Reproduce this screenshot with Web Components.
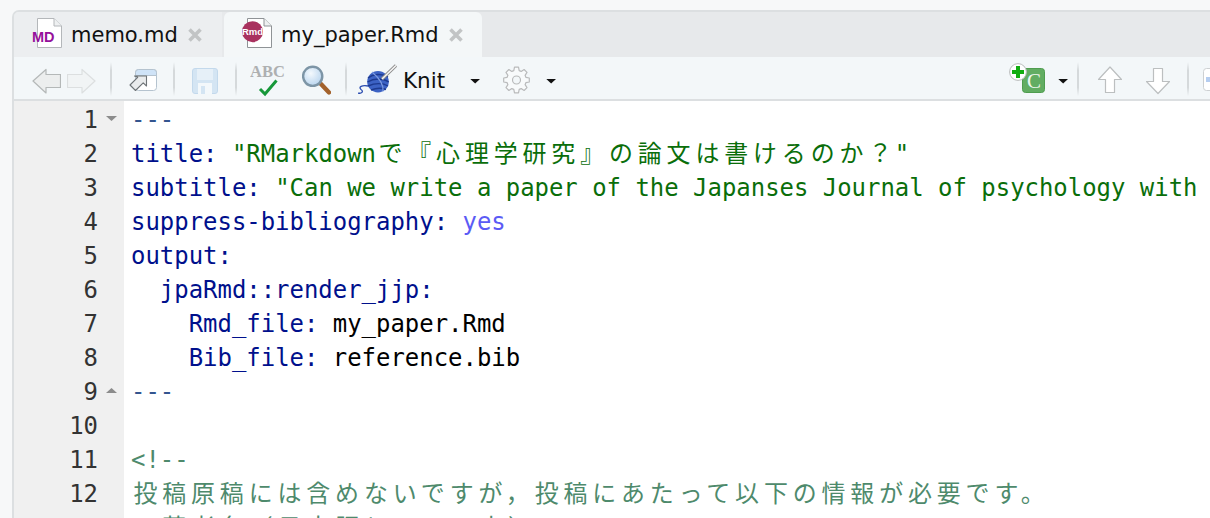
<!DOCTYPE html>
<html>
<head>
<meta charset="utf-8">
<title>my_paper.Rmd</title>
<style>
  html, body { margin: 0; height: 518px; overflow: hidden; background: #f7f8f9; }
</style>
</head>
<body>

<source-window>
  <tab-strip>
    <file-tab icon="md" style="width:208px">memo.md</file-tab>
    <file-tab icon="rmd" active style="width:258px;margin-left:2px">my_paper.Rmd</file-tab>
  </tab-strip>
  <tool-bar>
    <tool-icon name="back" style="margin-left:18px"></tool-icon>
    <tool-icon name="forward" style="margin-left:6px"></tool-icon>
    <tool-sep style="margin-left:14px"></tool-sep>
    <tool-icon name="show" style="margin-left:15px"></tool-icon>
    <tool-sep style="margin-left:16px"></tool-sep>
    <tool-icon name="save" style="margin-left:17px"></tool-icon>
    <tool-sep style="margin-left:17px"></tool-sep>
    <tool-icon name="spell" style="margin-left:13px"></tool-icon>
    <tool-icon name="search" style="margin-left:17px"></tool-icon>
    <tool-sep style="margin-left:14px"></tool-sep>
    <tool-icon name="knit" style="margin-left:11px"></tool-icon>
    <tool-label style="margin-left:6px;width:67px">Knit</tool-label>
    <tool-icon name="caret"></tool-icon>
    <tool-icon name="gear" style="margin-left:22px"></tool-icon>
    <tool-icon name="caret" style="margin-left:16px"></tool-icon>
    <tool-icon name="chunk" style="margin-left:452px"></tool-icon>
    <tool-icon name="caret" style="margin-left:13px"></tool-icon>
    <tool-sep style="margin-left:8px"></tool-sep>
    <tool-icon name="up" style="margin-left:19px"></tool-icon>
    <tool-icon name="down" style="margin-left:24px"></tool-icon>
    <tool-sep style="margin-left:17px"></tool-sep>
    <tool-icon name="outline" style="margin-left:14px"></tool-icon>
  </tool-bar>
  <code-editor>
    <code-line n="1" fold="open"><code-tok kind="rule">---</code-tok></code-line>
    <code-line n="2"><code-tok kind="key">title:</code-tok> <code-tok kind="str">"RMarkdown</code-tok><code-tok kind="str" cjk>で『心理学研究』の論文は書けるのか</code-tok><code-tok kind="str" tail>？</code-tok><code-tok kind="str">"</code-tok></code-line>
    <code-line n="3"><code-tok kind="key">subtitle:</code-tok> <code-tok kind="str">"Can we write a paper of the Japanses Journal of psychology with</code-tok></code-line>
    <code-line n="4"><code-tok kind="key">suppress-bibliography:</code-tok> <code-tok kind="bool">yes</code-tok></code-line>
    <code-line n="5"><code-tok kind="key">output:</code-tok></code-line>
    <code-line n="6">  <code-tok kind="key">jpaRmd::render_jjp:</code-tok></code-line>
    <code-line n="7">    <code-tok kind="key">Rmd_file:</code-tok> my_paper.Rmd</code-line>
    <code-line n="8">    <code-tok kind="key">Bib_file:</code-tok> reference.bib</code-line>
    <code-line n="9" fold="close"><code-tok kind="rule">---</code-tok></code-line>
    <code-line n="10"></code-line>
    <code-line n="11"><code-tok kind="cmt">&lt;!--</code-tok></code-line>
    <code-line n="12"><code-tok kind="cmt" cjk>投稿原稿には含めないですが，投稿にあたって以下の情報が必要です。</code-tok></code-line>
    <code-line n="13"><code-tok kind="cmt">- </code-tok><code-tok kind="cmt" cjk>著者名（日本語とローマ字）</code-tok></code-line>
  </code-editor>
</source-window>

<script>
'use strict';

// same little base class for all of them, only markup differs
class ShadowBase extends HTMLElement {
  constructor(html) {
    super();
    this.attachShadow({mode: 'open'}).innerHTML = html;
  }
}

class SourceWindow extends ShadowBase {
  constructor() {
    super(`<style>
      :host { display: block; width: 1230px; margin: 10px 0 0 12px; height: 508px; overflow: hidden;
        box-sizing: border-box; border-top: 2px solid #dcdfe1; border-left: 2px solid #dcdfe1;
        border-top-left-radius: 7px; background: #fff; }
    </style><slot></slot>`);
  }
}

class TabStrip extends ShadowBase {
  constructor() {
    super(`<style>
      :host { display: flex; height: 45px; background: #e7e9eb; }
    </style><slot></slot>`);
  }
}

// doc icons for the tabs
const TAB_ICONS = {
  md: `<svg width="36" height="45" viewBox="0 0 36 45">
      <path d="M5.5 6.5H22L29.5 14V35.5H5.5Z" fill="#fff" stroke="#b4b7ba"/>
      <path d="M22 6.5V14H29.5" fill="#eef0f1" stroke="#b4b7ba"/>
      <text x="0" y="30" font-family="Liberation Sans" font-weight="700" font-size="14.5" fill="#95109b">MD</text>
    </svg>`,
  rmd: `<svg width="36" height="45" viewBox="0 0 36 45">
      <path d="M5.5 6.5H22L29.5 14V35.5H5.5Z" fill="#fff" stroke="#8f9396"/>
      <path d="M22 6.5V14H29.5" fill="#eef0f1" stroke="#8f9396"/>
      <circle cx="10.5" cy="19.7" r="10.5" fill="#a9325f"/>
      <text x="10.5" y="23" text-anchor="middle" font-family="Liberation Sans" font-weight="700" font-size="9.5" fill="#fff">Rmd</text>
    </svg>`
};

class FileTab extends ShadowBase {
  constructor() {
    super(`<style>
      :host { display: flex; align-items: center; box-sizing: border-box; height: 45px; padding-left: 18px;
        background: #eceef0; font: 21px "DejaVu Sans", sans-serif; color: #111; }
      :host([active]) { background: #f4f7f8; border-radius: 6px 6px 0 0; }
      #ic { width: 36px; height: 45px; margin-right: 3px; flex: none; }
      #x { margin-left: 9px; flex: none; display: flex; }
      .lb { padding-top: 1px; }
    </style>
    <span id="ic"></span><span class="lb"><slot></slot></span>
    <span id="x"><svg width="16" height="14" viewBox="0 0 16 14"><path d="M2.5 1.5L13.5 12.5M13.5 1.5L2.5 12.5" stroke="#c2c4c5" stroke-width="3.6"/></svg></span>`);
  }
  connectedCallback() {
    this.shadowRoot.getElementById('ic').innerHTML = TAB_ICONS[this.getAttribute('icon')];
  }
}

class ToolBar extends ShadowBase {
  constructor() {
    super(`<style>
      :host { display: flex; align-items: flex-start; height: 42px; background: #f3f7f9;
        border-bottom: 2px solid #dcdfe1; }
    </style><slot></slot>`);
  }
}

class ToolSep extends ShadowBase {
  constructor() {
    super(`<style>
      :host { display: block; flex: none; width: 2px; height: 34px; margin-top: 5px;
        background: linear-gradient(#f3f7f9, #d5d9db 25%, #d5d9db 75%, #f3f7f9); }
    </style>`);
  }
}

class ToolLabel extends ShadowBase {
  constructor() {
    super(`<style>
      :host { display: block; flex: none; height: 42px;
        font: 21.5px/47px "DejaVu Sans", sans-serif; color: #111; }
    </style><slot></slot>`);
  }
}

function gearPath(cx, cy, outer, inner, teeth) {
  var d = '';
  var step = Math.PI * 2 / teeth;
  for (var i = 0; i < teeth; i++) {
    var a = i * step - Math.PI / 2;
    var pts = [[inner, a - step * 0.36], [outer, a - step * 0.2], [outer, a + step * 0.2], [inner, a + step * 0.36]];
    pts.forEach(function(p, j) {
      var x = (cx + p[0] * Math.cos(p[1])).toFixed(1);
      var y = (cy + p[0] * Math.sin(p[1])).toFixed(1);
      d += (i === 0 && j === 0 ? 'M' : 'L') + x + ' ' + y;
    });
  }
  return d + 'Z';
}

// y in these drawings is measured from the top of the toolbar
const TOOL_ICONS = {
  back: [29, `<path d="M1 24L14 12.5V17.5H28.5V30.5H14V36Z" fill="#eceeee" stroke="#b4b8b8" stroke-width="1.2" stroke-linejoin="round"/>`],
  forward: [29, `<path d="M28 24L15 12.5V17.5H.5V30.5H15V36Z" fill="#f1f4f5" stroke="#dcdfe0" stroke-width="1.2" stroke-linejoin="round"/>`],
  show: [30, `<rect x="8.5" y="12.5" width="21" height="21" rx="3" fill="#fff" stroke="#b5c3cf"/>
    <path d="M8.5 18.5V15.5a3 3 0 0 1 3-3H26.5a3 3 0 0 1 3 3V18.5Z" fill="#cfe3f7" stroke="#b5c3cf"/>
    <path d="M19.5 19V29L16.2 25.8L8.5 33.5L3 28L10.7 20.3L7.5 19Z" fill="#e9ebec" stroke="#6f7477" stroke-width="1.1" stroke-linejoin="round"/>`],
  save: [26, `<rect x=".5" y="11.5" width="25" height="25" rx="2.5" fill="#d4e5f3" stroke="#c3d9ec"/>
    <rect x="5" y="12" width="16" height="11" fill="#e6f0f8"/>
    <rect x="6" y="26" width="14" height="11" fill="#f3f8fb"/>
    <rect x="9" y="29" width="4" height="8" fill="#d4e5f3"/>`],
  spell: [35, `<text x="17.5" y="20" text-anchor="middle" font-family="Liberation Serif" font-weight="700" font-size="16.5" fill="#aeb0b1">ABC</text>
    <path d="M10 32L15 37L26.5 23.5" fill="none" stroke="#17983a" stroke-width="3"/>`],
  search: [29, `<defs><radialGradient id="lens" cx=".4" cy=".35" r=".7"><stop offset="0" stop-color="#f4f9fd"/><stop offset="1" stop-color="#b6d3ee"/></radialGradient></defs>
    <path d="M19 27L27 35.5" stroke="#a3622c" stroke-width="4.4" stroke-linecap="round"/>
    <circle cx="10.7" cy="19.3" r="9.6" fill="url(#lens)" stroke="#7d95a6" stroke-width="2.4"/>`],
  knit: [39, `<path d="M10 29C4 28 0 30 3 32.5C6 34.5 3.5 37 0 36" fill="none" stroke="#2a4cb0" stroke-width="1.3"/>
    <circle cx="20" cy="24.7" r="10.8" fill="#3c62c4"/>
    <path d="M10 21C15 17 24 16 30 20M9.5 25C16 21 25 21 30.8 25M10 29C17 26 25 26 30 29M13 33C18 31 24 31 28 32.5" fill="none" stroke="#1d3a90" stroke-width="1.4"/>
    <path d="M14 15C20 20 26 27 25 34.5" fill="none" stroke="#7d9be0" stroke-width="1.1"/>
    <path d="M24 22L38 8.5" stroke="#8a8a8a" stroke-width="3.2"/>
    <path d="M24 22L38 8.5" stroke="#f5f5f5" stroke-width="1.6"/>`],
  caret: [11, `<path d="M.3 22H10L5.15 26.5Z" fill="#111"/>`],
  gear: [27, `<path d="${gearPath(13.5, 23, 13, 9.8, 8)}" fill="#f8fafb" stroke="#b9babb" stroke-width="1.2" stroke-linejoin="round"/>
    <circle cx="13.5" cy="23" r="4" fill="#f3f7f9" stroke="#b9babb" stroke-width="1.2"/>`],
  chunk: [36, `<rect x="13.5" y="11.5" width="22" height="24" rx="3" fill="#62ad62" stroke="#4f9d4f"/>
    <text x="25" y="31" text-anchor="middle" font-family="Liberation Serif" font-size="21" fill="#eef7ee">C</text>
    <circle cx="9" cy="15" r="8.4" fill="#fff" stroke="#b9bcbc"/>
    <path d="M9 9V21M3 15H15" stroke="#11ad11" stroke-width="4"/>`],
  up: [24, `<path d="M12 10L23.5 22.5H16.5V35.5H7.5V22.5H.5Z" fill="#fff" stroke="#bcbfc0" stroke-width="1.2" stroke-linejoin="round"/>`],
  down: [24, `<path d="M12 36.5L23.5 24.5H16.5V11.5H7.5V24.5H.5Z" fill="#fff" stroke="#bcbfc0" stroke-width="1.2" stroke-linejoin="round"/>`],
  outline: [24, `<rect x=".5" y="11.5" width="22" height="22" rx="3" fill="#fff" stroke="#cdd0d2"/>
    <rect x="3" y="20" width="18" height="5" fill="#b5cdf0"/>`]
};

class ToolIcon extends ShadowBase {
  constructor() {
    super(`<style>
      :host { display: block; flex: none; height: 42px; }
      svg { display: block; }
    </style><span id="box"></span>`);
  }
  connectedCallback() {
    const icon = TOOL_ICONS[this.getAttribute('name')];
    this.shadowRoot.getElementById('box').innerHTML =
      `<svg width="${icon[0]}" height="42" viewBox="0 0 ${icon[0]} 42">${icon[1]}</svg>`;
  }
}

class CodeEditor extends ShadowBase {
  constructor() {
    super(`<style>
      :host { display: block; padding-top: 2px; background: linear-gradient(90deg, #f0f0f0 110px, #fff 110px);
        font: 23.95px/34px "DejaVu Sans Mono", "Noto Sans CJK JP", monospace; color: #000; }
    </style><slot></slot>`);
  }
}

class CodeLine extends ShadowBase {
  constructor() {
    super(`<style>
      :host { display: flex; height: 34px; white-space: pre; }
      #gut { flex: none; width: 84px; text-align: right; color: #333; }
      #fold { flex: none; width: 33px; position: relative; }
      svg { position: absolute; left: 8px; top: 13px; }
    </style><span id="gut"></span><span id="fold"></span><span><slot></slot></span>`);
  }
  connectedCallback() {
    this.shadowRoot.getElementById('gut').textContent = this.getAttribute('n');
    const fold = this.getAttribute('fold');
    if (fold) {
      const d = fold === 'open' ? 'M0 0H11L5.5 5Z' : 'M0 5H11L5.5 0Z';
      this.shadowRoot.getElementById('fold').innerHTML =
        `<svg width="11" height="5" viewBox="0 0 11 5"><path d="${d}" fill="#8c8c8c"/></svg>`;
    }
  }
}

class CodeTok extends ShadowBase {
  constructor() {
    super(`<style>
      :host([kind=key]) { color: #00108c; }
      :host([kind=rule]) { color: #34558f; }
      :host([kind=str]) { color: #0a6e0a; }
      :host([kind=bool]) { color: #5b5bf5; }
      :host([kind=cmt]) { color: #4e8a6c; }
      /* each kana/kanji takes two cells, glyph centred in them */
      :host([cjk]) { letter-spacing: calc(2ch - 1em); padding-left: 2.45px; }
      /* follows a cjk run: uses up the left padding so the closing quote stays on its cell */
      :host([tail]) { letter-spacing: calc(2ch - 1em - 2.45px); }
    </style><slot></slot>`);
  }
}

customElements.define('source-window', SourceWindow);
customElements.define('tab-strip', TabStrip);
customElements.define('file-tab', FileTab);
customElements.define('tool-bar', ToolBar);
customElements.define('tool-sep', ToolSep);
customElements.define('tool-label', ToolLabel);
customElements.define('tool-icon', ToolIcon);
customElements.define('code-editor', CodeEditor);
customElements.define('code-line', CodeLine);
customElements.define('code-tok', CodeTok);
</script>
</body>
</html>
